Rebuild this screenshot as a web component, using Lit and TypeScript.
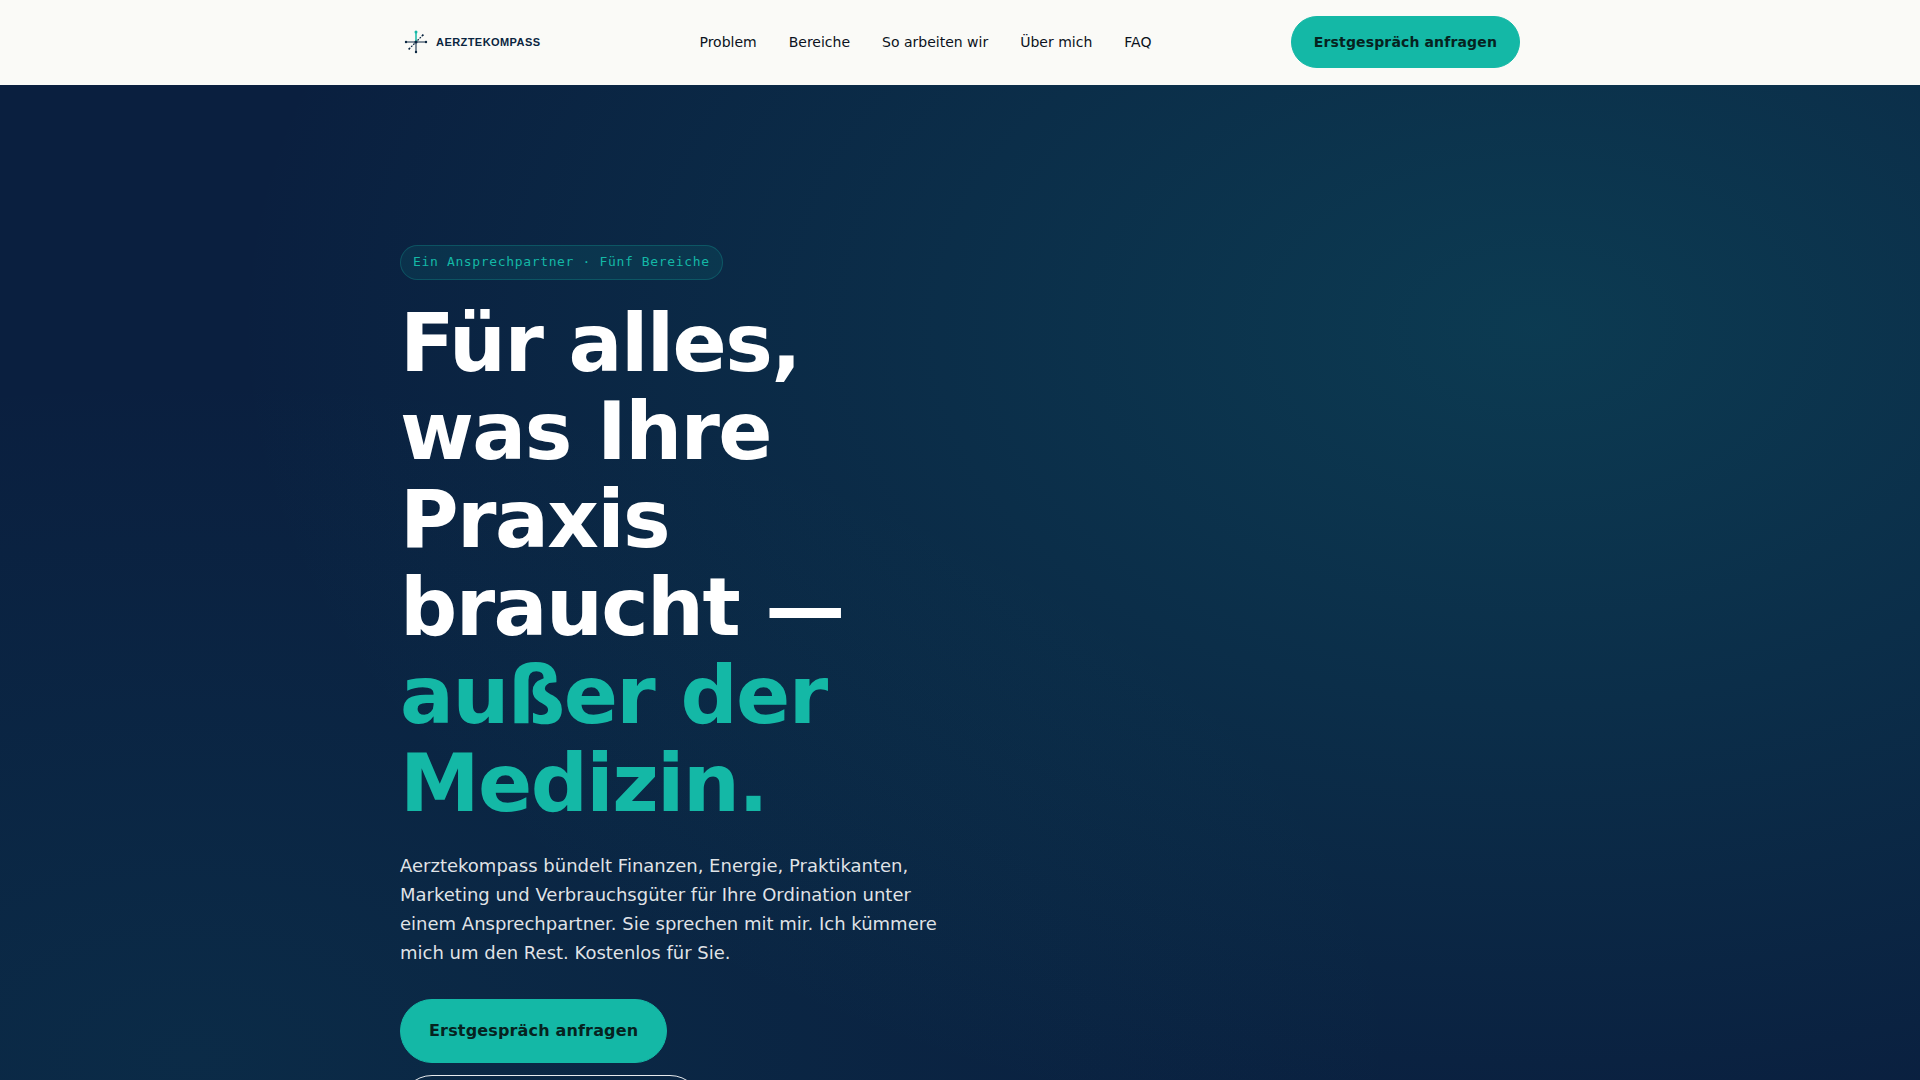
import { LitElement, html, css } from "lit";
import { customElement } from "lit/decorators.js";

const NAV_ITEMS = [
  { label: "Problem", href: "#problem" },
  { label: "Bereiche", href: "#bereiche" },
  { label: "So arbeiten wir", href: "#ablauf" },
  { label: "Über mich", href: "#ueber-mich" },
  { label: "FAQ", href: "#faq" },
];

@customElement("site-header")
class SiteHeader extends LitElement {
  static styles = css`
    :host {
      display: block;
      background: #fafaf7;
      border-bottom: 1px solid #fafaf7;
    }
    .bar {
      display: flex;
      align-items: center;
      justify-content: space-between;
      max-width: 1120px;
      margin: 0 auto;
      padding: 16px 24px;
    }
    .logo {
      display: flex;
      align-items: center;
      gap: 4px;
      width: 160px;
      color: #0a2540;
      text-decoration: none;
      font: 700 11px/20px "Liberation Sans", Arial, sans-serif;
      letter-spacing: 0.04em;
    }
    .mark {
      width: 32px;
      height: 32px;
      flex: none;
    }
    .links {
      display: flex;
      gap: 32px;
      margin: 0;
      padding: 0;
      list-style: none;
    }
    .link {
      color: #0b1220;
      text-decoration: none;
      font-size: 14px;
      line-height: 22px;
    }
    .cta {
      box-sizing: border-box;
      height: 52px;
      padding: 0 22px;
      border: 1px solid #14b8a6;
      border-radius: 32px;
      background: #14b8a6;
      color: #06231f;
      font: 600 14px/22px "DejaVu Sans", sans-serif;
      letter-spacing: 0.01em;
      cursor: pointer;
    }
  `;

  render() {
    return html`
      <header class="bar">
        <a class="logo" href="#top">
          <svg class="mark" viewBox="0 0 32 32" fill="none" aria-hidden="true">
            <path d="M16 16V26M6 16H26" stroke="#0a2540" stroke-opacity=".65" stroke-width="1.6" />
            <path d="M9 23L23 9" stroke="#0a2540" stroke-width="1.2" stroke-dasharray="1.8 1.2" />
            <path d="M16 16V6" stroke="#14b8a6" stroke-opacity=".75" stroke-width="2" />
            <g fill="#0a2540">
              <circle cx="16" cy="16" r="1.6" />
              <circle cx="6" cy="16" r="1.2" />
              <circle cx="26" cy="16" r="1.2" />
              <circle cx="16" cy="26" r="1.2" />
              <circle cx="9.2" cy="22.8" r=".9" />
              <circle cx="22.8" cy="9.2" r=".9" />
            </g>
            <circle cx="16" cy="6" r="1.5" fill="#14b8a6" />
          </svg>
          <span>AERZTEKOMPASS</span>
        </a>
        <nav>
          <ul class="links">
            ${NAV_ITEMS.map(
              (item) => html`<li><a class="link" href=${item.href}>${item.label}</a></li>`
            )}
          </ul>
        </nav>
        <button class="cta" type="button">Erstgespräch anfragen</button>
      </header>
    `;
  }
}

@customElement("site-hero")
class SiteHero extends LitElement {
  static styles = css`
    :host {
      display: block;
      background:
        radial-gradient(ellipse at 80% 20%, rgba(20, 184, 166, 0.18), transparent 60%),
        radial-gradient(ellipse at 10% 80%, rgba(20, 184, 166, 0.08), transparent 50%),
        #0a1f3f;
    }
    .wrap {
      max-width: 1120px;
      margin: 0 auto;
      padding: 160px 24px;
    }
    .content {
      display: flex;
      flex-direction: column;
      align-items: flex-start;
      max-width: 544px;
    }
    .eyebrow {
      margin: 0 0 20px;
      padding: 6px 12px 7px;
      border: 1px solid rgba(20, 184, 166, 0.25);
      border-radius: 18px;
      background: rgba(20, 184, 166, 0.1);
      color: #14b8a6;
      font: 400 13px/20px "DejaVu Sans Mono", monospace;
      letter-spacing: 0.05em;
    }
    .title {
      margin: 0;
      color: #fff;
      font-size: 80px;
      font-weight: 700;
      line-height: 88px;
      letter-spacing: -0.02em;
    }
    .accent {
      color: #14b8a6;
    }
    .lead {
      margin: 23px 0 32px;
      color: rgba(255, 255, 255, 0.88);
      font-size: 18px;
      line-height: 29px;
    }
    .actions {
      display: flex;
      flex-direction: column;
      align-items: flex-start;
      gap: 12px;
    }
    .button {
      box-sizing: border-box;
      height: 64px;
      padding: 0 28px;
      border: 1px solid #14b8a6;
      border-radius: 32px;
      background: #14b8a6;
      color: #06231f;
      font: 600 16px/26px "DejaVu Sans", sans-serif;
      letter-spacing: 0.01em;
      cursor: pointer;
    }
    .outline {
      min-width: 302px;
      border-color: rgba(255, 255, 255, 0.9);
      background: transparent;
      color: #fff;
    }
  `;

  render() {
    return html`
      <section class="wrap">
        <div class="content">
          <p class="eyebrow">Ein Ansprechpartner · Fünf Bereiche</p>
          <h1 class="title">
            Für alles, was Ihre Praxis braucht —
            <span class="accent">außer der Medizin.</span>
          </h1>
          <p class="lead">
            Aerztekompass bündelt Finanzen, Energie, Praktikanten, Marketing und
            Verbrauchsgüter für Ihre Ordination unter einem Ansprechpartner. Sie
            sprechen mit mir. Ich kümmere mich um den Rest. Kostenlos für Sie.
          </p>
          <div class="actions">
            <button class="button" type="button">Erstgespräch anfragen</button>
            <button class="button outline" type="button">So arbeiten wir</button>
          </div>
        </div>
      </section>
    `;
  }
}

@customElement("app-root")
class AppRoot extends LitElement {
  static styles = css`
    :host {
      display: block;
      font-family: "DejaVu Sans", sans-serif;
    }
  `;

  render() {
    return html`
      <site-header></site-header>
      <main><site-hero></site-hero></main>
    `;
  }
}
